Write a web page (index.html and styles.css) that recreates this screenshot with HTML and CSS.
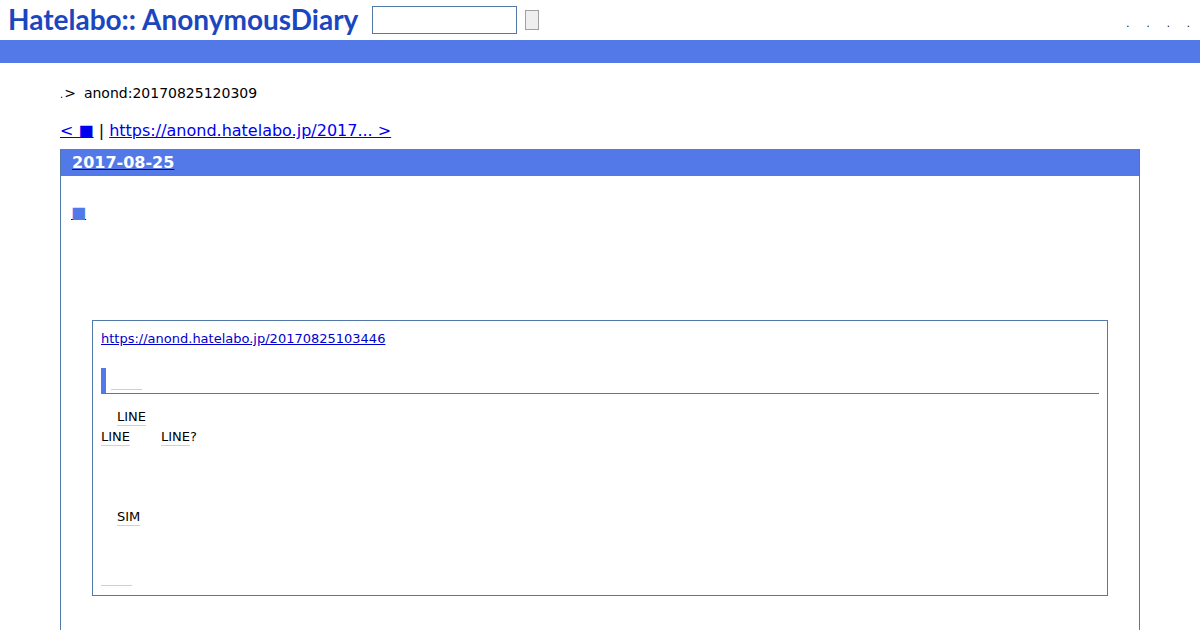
FILE: index.html
```html
<!DOCTYPE html>
<html lang="ja">
<head>
<meta charset="UTF-8">
<meta name="viewport" content="width=device-width, initial-scale=1.0">
<title>anond:20170825120309</title>
<link rel="stylesheet" href="styles.css">
</head>
<body>
  <header id="header">
    <h1><a href="#"><span>Hatelabo::</span><span>AnonymousDiary</span></a></h1>
    <form class="search-form">
      <input type="text" class="search-word" aria-label="Search">
      <button type="button" class="search-button" aria-label="Search"></button>
    </form>
    <ul class="guide">
      <li>.</li>
      <li>.</li>
      <li>.</li>
      <li>.</li>
    </ul>
  </header>
  <div id="bannersub"></div>

  <main id="container">
    <div class="breadcrumb"><span class="dot">.</span><span>&gt;</span><span class="current">anond:20170825120309</span></div>
    <div class="pager"><a href="#">&lt; ■</a> | <a href="#">https://anond.hatelabo.jp/2017... &gt;</a></div>

    <div class="day">
      <h2><a href="#"><span>2017-08-25</span></a></h2>
      <div class="body">
        <h3><a href="#"><span>■</span></a></h3>
        <blockquote>
          <p><a href="#">https://anond.hatelabo.jp/20170825103446</a></p>
          <h4><span class="keyword blank"></span></h4>
          <p><span class="space"></span><a class="keyword" href="#">LINE</a><br>
          <a class="keyword" href="#">LINE</a><span class="space wide"></span><a class="keyword" href="#">LINE</a>?<br>
          <br>
          <br>
          <br>
          <span class="space"></span><a class="keyword" href="#">SIM</a><br>
          <br>
          <br>
          <span class="keyword blank"></span></p>
        </blockquote>
      </div>
    </div>
  </main>
</body>
</html>
```
FILE: styles.css
```css
body {
  margin: 0;
  font-family: "DejaVu Sans", sans-serif;
  font-size: 16px;
  color: #000;
  background-color: #fff;
}
a {
  color: #0000cc;
}
#header {
  display: flex;
  align-items: center;
  height: 40px;
  padding: 0 10px 0 8px;
}
#header h1 {
  margin: 0 14px 0 0;
  font-family: Lato, sans-serif;
  font-size: 28px;
  line-height: 38px;
  padding-bottom: 2px;
}
#header h1 a {
  display: flex;
  gap: 6px;
  color: #1c46c0;
  text-decoration: none;
}
.search-form {
  display: flex;
  align-items: center;
  gap: 8px;
}
.search-word {
  box-sizing: border-box;
  width: 145px;
  height: 28px;
  border: 1px solid #5279a7;
  background-color: #fff;
}
.search-button {
  box-sizing: border-box;
  width: 14px;
  height: 20px;
  padding: 0;
  border: 1px solid #a0a0a0;
  background-color: #efefef;
}
.guide {
  display: flex;
  gap: 17px;
  margin: 0 0 0 auto;
  padding: 8px 0 0;
  list-style: none;
  font-size: 10px;
  line-height: 12px;
}
#bannersub {
  height: 23px;
  background-color: #5279e7;
}
#container {
  margin: 0 60px;
  padding-top: 20px;
}
.breadcrumb {
  display: flex;
  align-items: baseline;
  font-size: 14px;
  line-height: 20px;
}
.breadcrumb .dot {
  margin-right: 1px;
  font-size: 10px;
}
.breadcrumb .current {
  margin-left: 8px;
}
.pager {
  margin: 16px 0 9px;
  line-height: 19px;
}
.pager a {
  color: #0000ee;
}
.day {
  border: 1px solid #5279a7;
  border-top: none;
}
.day h2 {
  margin: 0;
  padding: 0 11px;
  font-size: 16px;
  line-height: 27px;
  background-color: #5279e7;
}
.day h2 span {
  color: #fff;
}
.day .body {
  padding: 24px 10px;
}
.day h3 {
  margin: 0 0 94px;
  font-size: 16px;
  line-height: 26px;
}
.day h3 span {
  color: #5279e7;
}
blockquote {
  margin: 0 21px 60px;
  padding: 8px;
  border: 1px solid #5279a7;
  font-size: 13px;
  line-height: 20px;
}
blockquote p {
  margin: 0;
}
blockquote h4 {
  display: flex;
  height: 25px;
  margin: 19px 0 13px;
  padding-left: 5px;
  border-left: 5px solid #5279e7;
  border-bottom: 1px solid #5279a7;
}
.keyword {
  padding-bottom: 1px;
  color: #000;
  text-decoration: none;
  border-bottom: 1px solid #d0d0d0;
}
.blank {
  padding-right: 31px;
}
h4 .blank {
  height: 20px;
}
.space {
  display: inline-block;
  width: 16px;
}
.wide {
  width: 31px;
}
```
